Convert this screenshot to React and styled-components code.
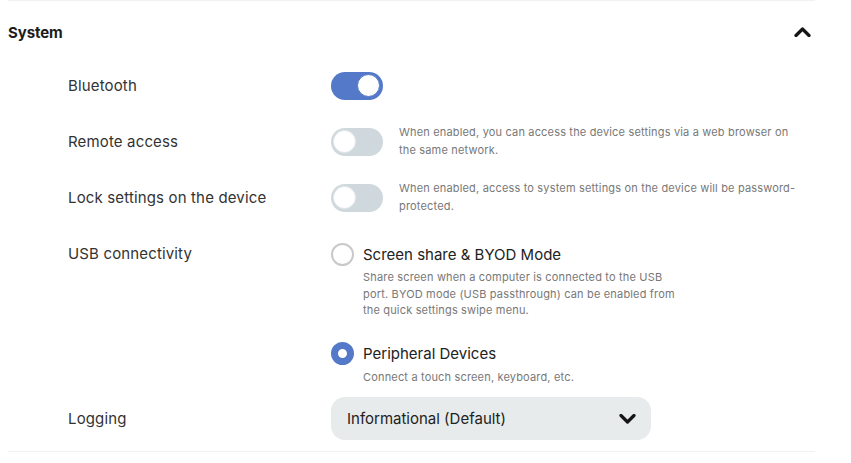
import React from "react";
import styled, { createGlobalStyle } from "styled-components";

const GlobalStyle = createGlobalStyle`
  body {
    margin: 0;
    background: #ffffff;
    font-family: Inter, "Noto Sans", sans-serif;
  }
`;

const Section = styled.section`
  width: 807px;
  margin-left: 8px;
  border-top: 1px solid #f1f1f1;
  border-bottom: 1px solid #f1f1f1;
  padding-bottom: 11px;
`;

const Header = styled.div`
  height: 62px;
  display: flex;
  align-items: center;
  justify-content: space-between;
  padding-right: 4px;

  h2 {
    margin: 0;
    font-size: 15px;
    font-weight: 700;
    color: #1c1c1c;
    letter-spacing: -0.1px;
  }
`;

const Rows = styled.div`
  padding-top: 9px;
  padding-left: 60px;
  display: flex;
  flex-direction: column;
`;

const Row = styled.div`
  display: grid;
  grid-template-columns: 263px 1fr;
  align-items: ${(p) => (p.$center ? "center" : "start")};
  margin-bottom: ${(p) => p.$gap}px;
`;

const Label = styled.div`
  font-size: 15px;
  line-height: 28px;
  letter-spacing: 0.15px;
  color: #333333;
`;

const Control = styled.div`
  height: 28px;
  display: flex;
  align-items: center;
  gap: 16px;
`;

const Track = styled.div`
  flex: none;
  width: 52px;
  height: 28px;
  border-radius: 14px;
  background: ${(p) => (p.$on ? "#5479c9" : "#cfd8dc")};
  position: relative;

  &::after {
    content: "";
    position: absolute;
    top: 2px;
    left: ${(p) => (p.$on ? "26px" : "2px")};
    width: 21px;
    height: 21px;
    border-radius: 50%;
    background: #ffffff;
    border: 1.5px solid ${(p) => (p.$on ? "#5479c9" : "#e3e8ea")};
  }
`;

const Hint = styled.p`
  margin: -2px 0 0;
  max-width: 400px;
  font-size: 11px;
  line-height: 18px;
  letter-spacing: 0.17px;
  color: #787878;
`;

const Options = styled.div`
  display: flex;
  flex-direction: column;
`;

const Option = styled.div`
  margin-bottom: ${(p) => p.$gap}px;
`;

const OptionHead = styled.div`
  display: flex;
  align-items: center;
  gap: 9px;
  height: 28px;
  font-size: 15px;
  color: #222222;
`;

const Radio = styled.span`
  flex: none;
  box-sizing: border-box;
  width: 23px;
  height: 23px;
  border-radius: 50%;
  background: #ffffff;
  border: ${(p) => (p.$checked ? "7px solid #5479c9" : "2.5px solid #c9c9c9")};
`;

const OptionHint = styled.p`
  margin: 1px 0 0 32px;
  max-width: 315px;
  font-size: 11px;
  line-height: 16.5px;
  letter-spacing: 0.17px;
  color: #787878;
`;

const Select = styled.div`
  width: 320px;
  height: 43px;
  box-sizing: border-box;
  margin-top: -1px;
  border-radius: 14px;
  background: #e8ebeb;
  display: flex;
  align-items: center;
  justify-content: space-between;
  padding: 0 15px 0 16px;
  font-size: 15px;
  color: #222222;
`;

function Chevron({ up }) {
  return (
    <svg width="17" height="10" viewBox="0 0 17 10">
      <polyline
        points={up ? "2,8.5 8.5,2 15,8.5" : "2,1.5 8.5,8 15,1.5"}
        fill="none"
        stroke="#161616"
        strokeWidth="3.2"
        strokeLinecap="round"
        strokeLinejoin="round"
      />
    </svg>
  );
}

function Toggle({ on }) {
  return <Track $on={on} />;
}

export default function App() {
  return (
    <>
      <GlobalStyle />
      <Section>
        <Header>
          <h2>System</h2>
          <Chevron up />
        </Header>
        <Rows>
          <Row $center $gap={28}>
            <Label>Bluetooth</Label>
            <Control>
              <Toggle on />
            </Control>
          </Row>
          <Row $center $gap={28}>
            <Label>Remote access</Label>
            <Control>
              <Toggle />
              <Hint>
                When enabled, you can access the device settings via a web browser on
                the same network.
              </Hint>
            </Control>
          </Row>
          <Row $center $gap={28}>
            <Label>Lock settings on the device</Label>
            <Control>
              <Toggle />
              <Hint>
                When enabled, access to system settings on the device will be
                password-protected.
              </Hint>
            </Control>
          </Row>
          <Row $gap={13}>
            <Label>USB connectivity</Label>
            <Options>
              <Option $gap={21}>
                <OptionHead>
                  <Radio />
                  Screen share &amp; BYOD Mode
                </OptionHead>
                <OptionHint>
                  Share screen when a computer is connected to the USB port. BYOD mode
                  (USB passthrough) can be enabled from the quick settings swipe menu.
                </OptionHint>
              </Option>
              <Option $gap={0}>
                <OptionHead>
                  <Radio $checked />
                  Peripheral Devices
                </OptionHead>
                <OptionHint>Connect a touch screen, keyboard, etc.</OptionHint>
              </Option>
            </Options>
          </Row>
          <Row $center $gap={0}>
            <Label>Logging</Label>
            <Select>
              Informational (Default)
              <Chevron />
            </Select>
          </Row>
        </Rows>
      </Section>
    </>
  );
}
